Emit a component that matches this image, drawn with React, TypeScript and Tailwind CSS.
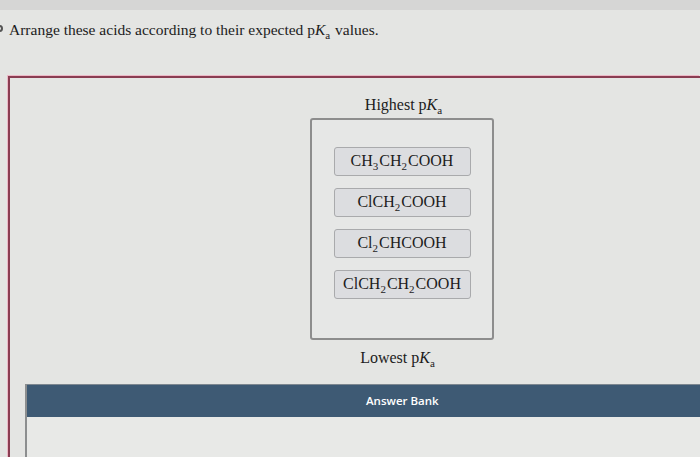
import React from 'react';

const serif = { fontFamily: '"Liberation Serif", "Times New Roman", serif' };

// formula pieces: [text, subscript]
type Part = [string, string?];

const acids: Part[][] = [
  [['CH', '3'], ['CH', '2'], ['COOH']],
  [['ClCH', '2'], ['COOH']],
  [['Cl', '2'], ['CHCOOH']],
  [['ClCH', '2'], ['CH', '2'], ['COOH']],
];

const Sub: React.FC<{ children: React.ReactNode }> = ({ children }) => (
  <sub className="text-[11px] relative top-[4px] mr-[1px]">{children}</sub>
);

const Formula: React.FC<{ parts: Part[] }> = ({ parts }) => (
  <span>
    {parts.map(([text, sub], i) => (
      <React.Fragment key={i}>
        {text}
        {sub && <Sub>{sub}</Sub>}
      </React.Fragment>
    ))}
  </span>
);

const PKa: React.FC = () => (
  <>
    p<i>K</i>
    <Sub>a</Sub>
  </>
);

const App: React.FC = () => {
  return (
    <div className="w-[700px] h-[457px] overflow-hidden bg-[#e4e5e3] text-[#1c1c1c]" style={serif}>
      <div className="h-[10px] bg-[#d6d6d5]" />

      {/* Question */}
      <div className="relative h-[40px] flex items-center pl-[9px] text-[15.5px]">
        <span className="absolute left-[-4px] top-[15px] w-[7px] h-[7px] rounded-full border-2 border-[#555]" />
        <span>
          Arrange these acids according to their expected <PKa /> values.
        </span>
      </div>

      {/* Ranking panel */}
      <div className="mt-[26px] ml-[8px] border-l-2 border-t-2 border-[#8a3d52] shadow-[-1px_-1px_0_0_#ecb9c7] h-[390px]">
        <div className="ml-[300px] w-[184px] flex flex-col items-center">
          <div className="mt-[15px] h-[24px] text-[16px] leading-[24px] pl-[4px]">
            Highest <PKa />
          </div>
          <div className="mt-[1px] w-[184px] h-[222px] rounded-[3px] border-2 border-[#8d8d8d] bg-[#e6e7e6] flex flex-col items-center pt-[27px] gap-[12px]">
            {acids.map((parts, i) => (
              <div
                key={i}
                className="w-[137px] h-[29px] rounded-[3px] border border-[#a9aaac] bg-[#dcdde0] flex items-center justify-center text-[16px] pb-[2px]"
              >
                <Formula parts={parts} />
              </div>
            ))}
          </div>
          <div className="mt-[6px] h-[24px] text-[16px] leading-[24px] pr-[8px]">
            Lowest <PKa />
          </div>
        </div>

        {/* Answer bank */}
        <div className="mt-[14px] ml-[15px] border-l-2 border-[#8c8e8f]">
          <div className="h-[33px] bg-[#3e5a74] border-t border-[#7d8790] flex items-center pl-[339px]">
            <span
              className="text-white text-[11.5px] font-semibold"
              style={{ fontFamily: '"Open Sans", "Noto Sans", sans-serif' }}
            >
              Answer Bank
            </span>
          </div>
          <div className="h-[60px] bg-[#e8e9e7]" />
        </div>
      </div>
    </div>
  );
};

export default App;
